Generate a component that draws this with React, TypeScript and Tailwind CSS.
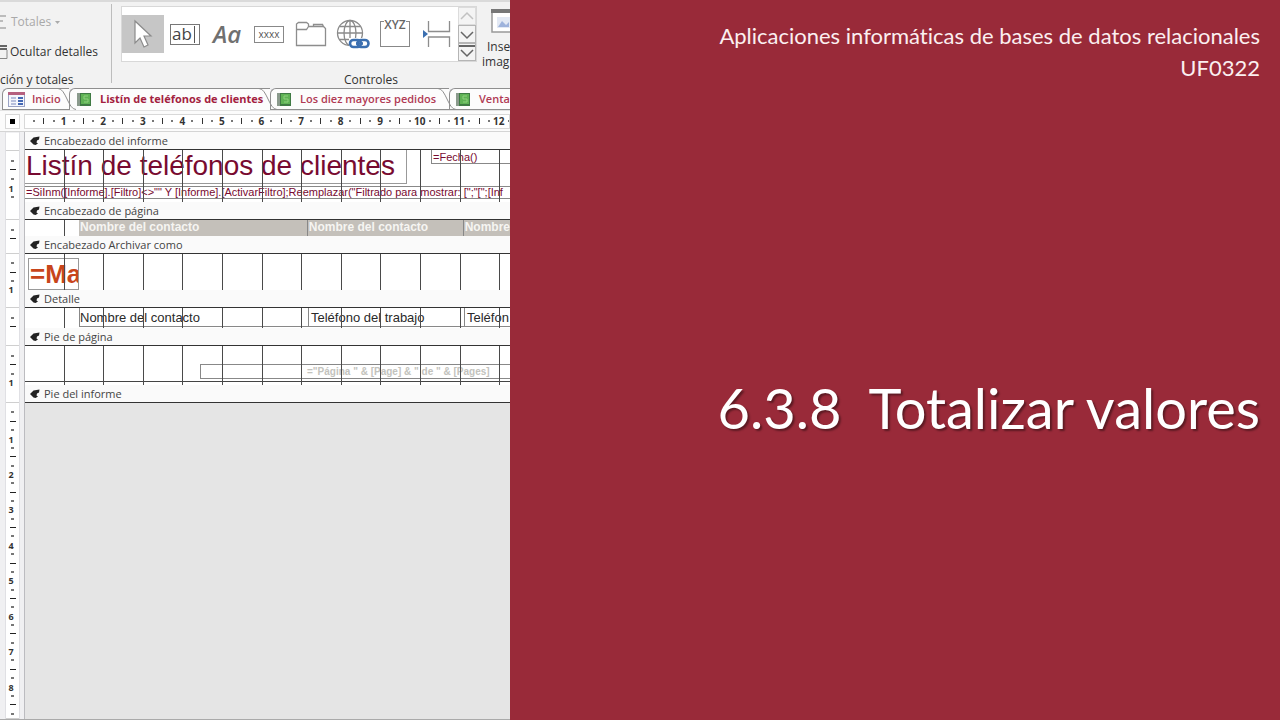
import type { ReactNode } from 'react';

const CM_X = 39.6;

const rulerTicks = (count: number) =>
  Array.from({ length: count }, (_, i) => {
    const step = (i + 1) % 4;
    if (step === 0) return String((i + 1) / 4);
    return step === 2 ? 'dash' : 'dot';
  });

function HorizontalRuler() {
  return (
    <div className="flex h-[21px] items-center border-b border-[#d4d4d4] bg-[#fbfbfb]">
      <div className="ml-[5px] flex h-[15px] w-[15px] items-center justify-center border border-[#d8d8d8] bg-white">
        <div className="h-[5px] w-[5px] bg-black" />
      </div>
      <div className="ml-[4px] h-[15px] flex-1 overflow-hidden border border-[#d8d8d8] bg-white pl-[4px]">
        <div className="flex h-full w-[485px] items-center">
          {rulerTicks(49).map((tick, i) => (
            <div key={i} className="flex min-w-0 flex-1 justify-center text-[10px] leading-[12px] font-bold text-[#333]">
              {tick === 'dot' && <div className="h-[2px] w-[2px] bg-[#777]" />}
              {tick === 'dash' && <div className="h-[6px] w-px bg-[#333]" />}
              {tick !== 'dot' && tick !== 'dash' && tick}
            </div>
          ))}
        </div>
      </div>
    </div>
  );
}

function VerticalTicks({ count }: { count: number }) {
  return rulerTicks(count).map((tick, i) => (
    <div key={i} className="flex min-h-0 flex-1 items-center justify-center text-[9px] leading-[9px] font-bold text-[#333]">
      {tick === 'dot' && <div className="h-[2px] w-[3px] bg-[#777]" />}
      {tick === 'dash' && <div className="h-px w-[6px] bg-[#222]" />}
      {tick !== 'dot' && tick !== 'dash' && <span className="pr-[3px]">{tick}</span>}
    </div>
  ));
}

function VerticalRuler() {
  const cell = 'flex flex-col border-b border-[#cfcfcf] bg-white pt-[5px]';
  return (
    <div className="ml-[5px] flex w-[15px] shrink-0 flex-col border-x border-[#e0e0e4] pt-px">
      <div className="h-[18px] border-b border-[#cfcfcf] bg-white" />
      <div className={`${cell} h-[69px] pb-[17px]`}>
        <VerticalTicks count={5} />
      </div>
      <div className={`${cell} h-[34px] pb-[10px]`}>
        <VerticalTicks count={2} />
      </div>
      <div className={`${cell} h-[54px] pb-[13px]`}>
        <VerticalTicks count={4} />
      </div>
      <div className={`${cell} h-[38px] pb-[14px]`}>
        <VerticalTicks count={2} />
      </div>
      <div className={`${cell} h-[57px] pb-[15px]`}>
        <VerticalTicks count={4} />
      </div>
      <div className={`${cell} flex-1`}>
        <VerticalTicks count={35} />
      </div>
    </div>
  );
}

function GridLines({ to = 12 }: { to?: number }) {
  return (
    <svg className="pointer-events-none absolute inset-0 h-full w-full" aria-hidden="true">
      {Array.from({ length: to }, (_, i) => {
        const x = Math.round(CM_X * (i + 1) - 1) + 0.5;
        return <line key={i} x1={x} x2={x} y1="0" y2="100%" stroke="#4a4a4a" strokeWidth="1" />;
      })}
    </svg>
  );
}

function SectionBar({ title }: { title: string }) {
  return (
    <div className="flex h-[17px] items-center gap-[4px] bg-[#fafafa] pl-[5px] text-[11px] leading-[16px] text-[#444]">
      <svg width="10" height="10" viewBox="0 0 10 10" fill="#222" aria-hidden="true">
        <path d="M0 5 3.500 1.500 9.500 .5 9 3.500 7 4.500 6.500 6.500 8 7.500 5.500 9 3.500 8.500z" />
      </svg>
      <span>{title}</span>
    </div>
  );
}

function SectionBody({ height, children, to }: { height: string; children?: ReactNode; to?: number }) {
  return (
    <div className={`relative overflow-hidden border-t border-[#333] bg-white ${height}`}>
      {children}
      <GridLines to={to} />
    </div>
  );
}

function ReportDesign() {
  return (
    <div className="flex min-w-0 flex-1 flex-col border-l border-[#bcbcc0] bg-[#e5e5e5]">
      <div className="flex h-full flex-col font-['Open_Sans',sans-serif]">
        <SectionBar title="Encabezado del informe" />
        <SectionBody height="h-[53px]">
          <div className="flex h-[34px] font-['Liberation_Sans',sans-serif] text-[#780a30]">
            <div className="w-[382px] border-r border-b border-[#999] pl-px text-[28px] leading-[32px] whitespace-nowrap">
              Listín de teléfonos de clientes
            </div>
            <div className="ml-[24px] h-[14px] flex-1 border-b border-l border-[#888] pl-px text-[11px] leading-[14px]">
              =Fecha()
            </div>
          </div>
          <div className="mt-[2px] h-[13px] overflow-hidden border-y border-[#888] pl-px font-['Liberation_Sans',sans-serif] text-[11px] leading-[11px] whitespace-nowrap text-[#780a30]">
            {'=SiInm([Informe].[Filtro]<>"" Y [Informe].[ActivarFiltro];Reemplazar("Filtrado para mostrar: [";"[";[Inf'}
          </div>
        </SectionBody>

        <SectionBar title="Encabezado de página" />
        <SectionBody height="h-[17px]" to={1}>
          <div className="ml-[54px] flex h-full bg-[#c4c0ba] font-['Liberation_Sans',sans-serif] text-[12px] leading-[14px] font-bold whitespace-nowrap text-[#f6f5f2]">
            <div className="w-[229px] border-r border-[#888] pl-px">Nombre del contacto</div>
            <div className="w-[156px] border-r border-[#888] pl-px">Nombre del contacto</div>
            <div className="flex-1 pl-px">Nombre</div>
          </div>
        </SectionBody>

        <SectionBar title="Encabezado Archivar como" />
        <SectionBody height="h-[37px]">
          <div className="mt-[4px] ml-[3px] h-[32px] w-[51px] overflow-hidden border border-[#999] pl-px font-['Liberation_Sans',sans-serif] text-[26px] leading-[30px] font-bold text-[#c8451b]">
            =Ma
          </div>
        </SectionBody>

        <SectionBar title="Detalle" />
        <SectionBody height="h-[21px]">
          <div className="ml-[54px] flex h-[19px] font-['Liberation_Sans',sans-serif] text-[13px] leading-[19px] whitespace-nowrap text-[#2a2a2a]">
            <div className="w-[229px] border-b border-l border-[#888]">Nombre del contacto</div>
            <div className="w-[156px] border-b border-l border-[#888] pl-[2px]">Teléfono del trabajo</div>
            <div className="flex-1 border-b border-l border-[#888] pl-[2px]">Teléfon</div>
          </div>
        </SectionBody>

        <SectionBar title="Pie de página" />
        <SectionBody height="h-[40px]">
          <div className="mt-[18px] ml-[175px] h-[15px] border-y border-l border-[#888] pl-[106px] font-['Liberation_Sans',sans-serif] text-[10px] leading-[14px] font-bold whitespace-nowrap text-[#c3c3bd]">
            {'="Página " & [Page] & " de " & [Pages]'}
          </div>
          <div className="mt-[2px] h-px bg-[#444]" />
        </SectionBody>

        <SectionBar title="Pie del informe" />
        <div className="h-px bg-[#333]" />
      </div>
    </div>
  );
}

const galleryIcons: { label: string; icon: ReactNode }[] = [
  {
    label: 'Seleccionar',
    icon: (
      <svg width="24" height="30" viewBox="0 0 24 30" aria-hidden="true">
        <path d="M4 2v22l5-5 4 9 4-2-4-9h7z" fill="#fff" stroke="#8b8b8b" strokeWidth="1.2" />
      </svg>
    ),
  },
  {
    label: 'Cuadro de texto',
    icon: (
      <span className="flex h-[21px] w-[30px] items-center gap-[2px] border border-[#777] pl-px text-[17px] leading-[18px] text-[#444]">
        ab
        <span className="h-[17px] w-px bg-[#555]" />
      </span>
    ),
  },
  {
    label: 'Etiqueta',
    icon: <span className="text-[24px] leading-[28px] font-semibold text-[#707070] italic">Aa</span>,
  },
  {
    label: 'Botón',
    icon: (
      <span className="h-[17px] border border-[#888] px-[4px] text-[10px] leading-[14px] text-[#555]">xxxx</span>
    ),
  },
  {
    label: 'Control de pestaña',
    icon: (
      <svg width="32" height="28" viewBox="0 0 32 28" fill="none" stroke="#8d8d8d" strokeWidth="1.300" aria-hidden="true">
        <path d="M1.500 25.500V4l2-1.500h8l2 1.500v2.500h15l2 2v17zM1.500 9.500h10l2-3M18.500 6.500v-2h9l1 2" />
      </svg>
    ),
  },
  {
    label: 'Hipervínculo',
    icon: (
      <svg width="34" height="32" viewBox="0 0 34 32" fill="none" aria-hidden="true">
        <g stroke="#8a8a8a" strokeWidth="1.300">
          <circle cx="14" cy="15" r="12.500" />
          <ellipse cx="14" cy="15" rx="6" ry="12.500" />
          <path d="M14 2.500v25M1.500 15h25M3.500 8.500h21M3.500 21.500h21" />
        </g>
        <path d="M13 20h20v11H13z" fill="#fff" />
        <g stroke="#3b6fb0" strokeWidth="2.600">
          <rect x="14" y="22" width="11" height="7" rx="3.500" />
          <rect x="21.500" y="22" width="11" height="7" rx="3.500" />
          <path d="M20 25.500h7" />
        </g>
      </svg>
    ),
  },
  {
    label: 'Grupo de opciones',
    icon: (
      <span className="flex h-[26px] w-[30px] items-start justify-center border border-[#888]">
        <span className="-mt-[3px] bg-white text-[12px] leading-[12px] font-semibold text-[#666]">XYZ</span>
      </span>
    ),
  },
  {
    label: 'Salto de página',
    icon: (
      <svg width="28" height="28" viewBox="0 0 28 28" fill="none" aria-hidden="true">
        <path d="M5.500 1v10.500h21V1M5.500 27V17h21v10" stroke="#8d8d8d" strokeWidth="1.300" />
        <path d="M0 10v8l5-4z" fill="#3b6fb0" />
      </svg>
    ),
  },
];

function ScrollButton({ label, disabled, more }: { label: string; disabled?: boolean; more?: boolean }) {
  return (
    <button
      type="button"
      aria-label={label}
      disabled={disabled}
      className="flex flex-1 items-center justify-center border border-[#b5b5b5] bg-[#f4f4f4] text-[#666] disabled:border-[#dcdcdc] disabled:text-[#c2c2c2]"
    >
      <svg width="16" height="14" viewBox="0 0 16 14" fill="none" stroke="currentColor" strokeWidth="1.500" aria-hidden="true">
        {disabled ? <path d="m2 10 6-6 6 6" /> : <path d="m2 5 6 6 6-6" />}
        {more && <path d="M0 1h16" strokeWidth="2" />}
      </svg>
    </button>
  );
}

function Ribbon() {
  return (
    <div className="flex h-[88px] overflow-hidden border-t-2 border-[#dadada] bg-[#f2f2f2] text-[12px] leading-[16px] text-[#333]">
      <div className="flex w-[111px] shrink-0 flex-col pt-[12px]">
        <button type="button" disabled className="flex h-[16px] items-center gap-[4px] text-[#a9a9a9]">
          <svg width="7" height="16" viewBox="0 0 7 16" fill="none" stroke="#aaa" strokeWidth="1.500" aria-hidden="true">
            <path d="M0 2h6M0 7h3M0 14h6" />
          </svg>
          Totales
          <svg width="5" height="3" viewBox="0 0 5 3" fill="#aaa" aria-hidden="true">
            <path d="M0 0h5L2.500 3z" />
          </svg>
        </button>
        <button type="button" className="mt-[14px] flex h-[16px] items-center gap-[2px] whitespace-nowrap">
          <svg width="8" height="14" viewBox="0 0 8 14" aria-hidden="true">
            <path d="M0 1h7M0 4h7" stroke="#666" strokeWidth="2" />
            <path d="M0 13.500h7V5" fill="none" stroke="#888" />
          </svg>
          Ocultar detalles
        </button>
        <div className="mt-[12px]">ción y totales</div>
      </div>
      <div className="mt-[2px] h-[79px] w-px shrink-0 bg-[#bdbdbd]" />
      <div className="ml-[9px] flex w-[356px] shrink-0 flex-col pt-[4px]">
        <div className="flex h-[56px] w-full border border-[#d8d8d8] bg-white">
          {galleryIcons.map(({ label, icon }, i) => (
            <button
              key={label}
              type="button"
              aria-label={label}
              className={`mt-[8px] flex h-[38px] w-[42px] shrink-0 items-center justify-center ${i === 0 ? 'bg-[#c6c6c6]' : ''}`}
            >
              {icon}
            </button>
          ))}
          <div className="flex flex-1 flex-col">
            <ScrollButton label="Anterior" disabled />
            <ScrollButton label="Siguiente" />
            <ScrollButton label="Más" more />
          </div>
        </div>
        <div className="mt-[10px] pl-[223px]">Controles</div>
      </div>
      <button type="button" className="ml-[5px] flex shrink-0 flex-col items-start pt-[7px] leading-[15px]">
        <svg width="24" height="24" viewBox="0 0 24 24" className="ml-[9px]" aria-hidden="true">
          <rect x="1" y="1" width="28" height="22" fill="#fff" stroke="#999" strokeWidth="1.500" />
          <path d="M0 0h30v4H0z" fill="#777" />
          <rect x="6" y="8" width="18" height="11" fill="#e3e9f4" />
          <path d="m7 18 4-6 4 4 3-3v5z" fill="#9eb3dc" />
        </svg>
        <span className="mt-[6px] ml-[5px]">Inse</span>
        <span>imag</span>
      </button>
    </div>
  );
}

function ReportIcon() {
  return (
    <svg width="14" height="13" viewBox="0 0 14 13" aria-hidden="true">
      <rect width="14" height="13" fill="#3f7a44" />
      <path d="M0 0h3v13H0z" fill="#8a9a8c" />
      <rect x="4" y="1" width="9" height="10" fill="#5fb255" />
      <path d="M11 3H7v3h4v3H7" fill="none" stroke="#8ed07f" />
    </svg>
  );
}

function FormIcon() {
  return (
    <svg width="17" height="15" viewBox="0 0 17 15" aria-hidden="true">
      <rect x=".5" y=".5" width="16" height="14" fill="#f4f6fc" stroke="#9aa2c4" />
      <path d="M0 0h17v3H0z" fill="#b5607f" />
      <path d="M3 6h5M3 9h5M3 12h5" stroke="#7b88bb" />
      <path d="M10 6h5M10 9h5M10 12h5" stroke="#4468b4" strokeWidth="2" />
    </svg>
  );
}

function Tab({ label, icon, layout, active }: { label: string; icon: ReactNode; layout: string; active?: boolean }) {
  return (
    <button
      type="button"
      role="tab"
      aria-selected={!!active}
      className={`relative flex h-[22px] shrink-0 items-center rounded-tl-md border-t border-l border-[#8f8f8f] bg-[#fcfcfc] text-[11px] whitespace-nowrap ${layout} ${
        active ? 'font-bold text-[#a3213f]' : 'border-b font-semibold text-[#b03a54]'
      }`}
    >
      {icon}
      {label}
      <svg className="absolute -top-px -right-[7px] z-10" width="18" height="22" viewBox="0 0 18 22" aria-hidden="true">
        <path d="M0 .5C8 .5 10 21.500 18 21.500" fill="none" stroke="#8f8f8f" />
      </svg>
    </button>
  );
}

function AccessWindow() {
  return (
    <section className="flex w-[510px] shrink-0 flex-col overflow-hidden border-b border-[#aaa] bg-[#f0f0f2] font-['Open_Sans',sans-serif]">
      <Ribbon />
      <div role="tablist" className="flex h-[23px] overflow-hidden border-b border-[#e2e2e2] pl-[2px]">
        <Tab label="Inicio" icon={<FormIcon />} layout="w-[67px] gap-[7px] pl-[5px]" />
        <Tab label="Listín de teléfonos de clientes" icon={<ReportIcon />} layout="w-[201px] gap-[9px] pl-[7px]" active />
        <Tab label="Los diez mayores pedidos" icon={<ReportIcon />} layout="w-[179px] gap-[9px] pl-[6px]" />
        <Tab label="Venta" icon={<ReportIcon />} layout="w-[72px] gap-[9px] pl-[6px]" />
      </div>
      <HorizontalRuler />
      <div className="flex flex-1">
        <VerticalRuler />
        <div className="w-[4px] shrink-0" />
        <ReportDesign />
      </div>
    </section>
  );
}

export default function App() {
  return (
    <main className="flex min-h-screen bg-[#992a39]">
      <AccessWindow />
      <section className="flex min-w-0 flex-1 flex-col justify-between pt-[20px] pr-[20px] pb-[276px] text-right font-['Lato',sans-serif] text-[#fbeff0]">
        <p className="text-[22px] leading-[32px] [font-variant-ligatures:none]">
          Aplicaciones informáticas de bases de datos relacionales
          <br />
          UF0322
        </p>
        <h1 className="text-[56px] leading-[72px] whitespace-pre text-white [text-shadow:2px_2px_2px_rgba(0,0,0,0.4)]">
          {'6.3.8  Totalizar valores'}
        </h1>
      </section>
    </main>
  );
}
